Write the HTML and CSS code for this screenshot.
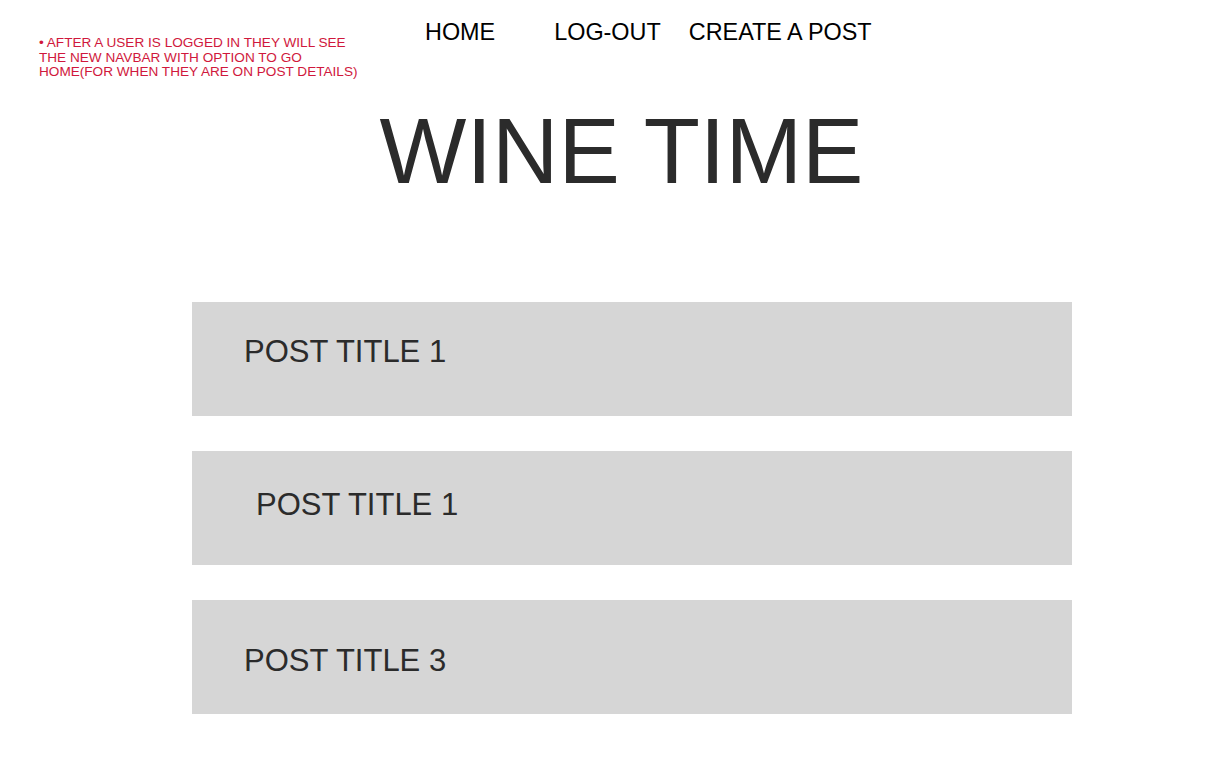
FILE: index.html
```html
<!DOCTYPE html>
<html lang="en">
<head>
<meta charset="utf-8">
<title>Wine Time</title>
<link rel="stylesheet" href="styles.css">
</head>
<body>
<header class="header">
  <p class="note">• AFTER A USER IS LOGGED IN THEY WILL SEE<br>THE NEW NAVBAR WITH OPTION TO GO<br>HOME(FOR WHEN THEY ARE ON POST DETAILS)</p>
  <nav class="nav">
    <a class="nav-link nav-home" href="#">HOME</a>
    <a class="nav-link" href="#">LOG-OUT</a>
    <a class="nav-link" href="#">CREATE A POST</a>
  </nav>
</header>
<h1 class="title">WINE TIME</h1>
<main class="posts">
  <div class="post post-a"><span class="post-title">POST TITLE 1</span></div>
  <div class="post post-b"><span class="post-title">POST TITLE 1</span></div>
  <div class="post post-c"><span class="post-title">POST TITLE 3</span></div>
</main>
</body>
</html>
```
FILE: styles.css
```css
* { box-sizing: border-box; }
html, body { margin: 0; padding: 0; background: #ffffff; }
body { font-family: "Liberation Sans", Arial, sans-serif; color: #2b2b2b; }

.header {
  display: flex;
  align-items: flex-start;
  padding: 21px 0 0 39px;
  height: 79px;
}
.note {
  flex: 0 0 386px;
  margin: 15px 0 0 0;
  font-size: 13.6px;
  line-height: 14.5px;
  color: #d0183c;
}
.nav {
  display: flex;
  gap: 28px;
}
.nav-link {
  font-size: 23.4px;
  line-height: 23px;
  color: #000000;
  text-decoration: none;
}
.nav-home { margin-right: 31px; }

.title {
  margin: 26px 0 0 0;
  padding-left: 22px;
  text-align: center;
  font-weight: normal;
  font-size: 92px;
  line-height: 92px;
  color: #2b2b2b;
}

.posts {
  display: flex;
  flex-direction: column;
  gap: 35px;
  margin: 105px 0 0 192px;
  width: 880px;
}
.post {
  height: 114px;
  background: #d6d6d6;
  padding-left: 52px;
}
.post-title {
  display: block;
  font-size: 31px;
  line-height: 30px;
  color: #2b2b2b;
}
.post-a { padding-top: 35px; }
.post-b { padding-top: 39px; padding-left: 64px; }
.post-c { padding-top: 46px; }
```
